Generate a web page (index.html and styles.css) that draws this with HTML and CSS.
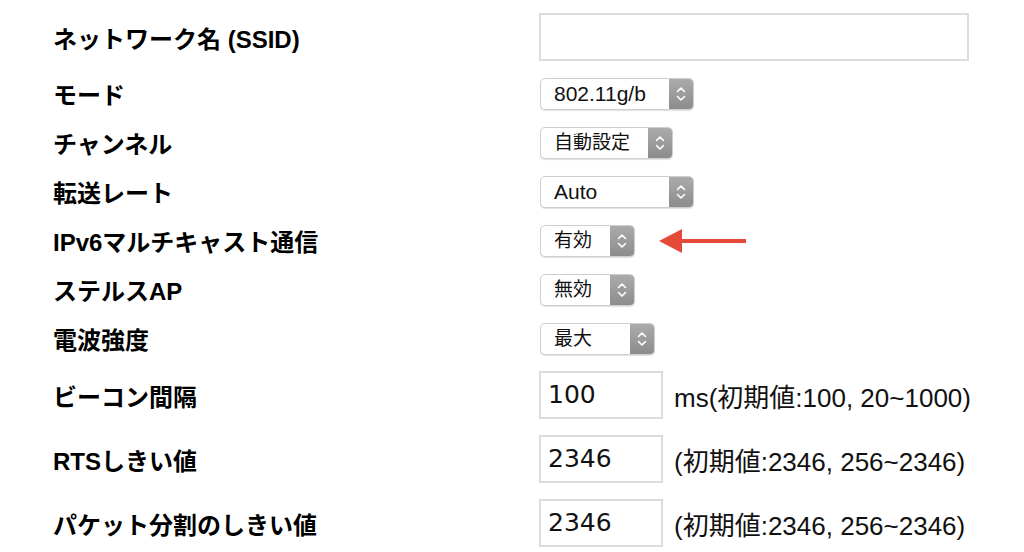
FILE: index.html
```html
<!DOCTYPE html>
<html lang="ja">
<head>
    <meta charset="UTF-8">
    <meta name="viewport" content="width=device-width, initial-scale=1.0">
    <title>無線設定</title>
    <link rel="stylesheet" href="styles.css">
</head>
<body>
    <div class="settings">
        <div class="row row-input">
            <div class="label">ネットワーク名 (SSID)</div>
            <div class="field"><span class="text-box wide"></span></div>
        </div>
        <div class="row">
            <div class="label">モード</div>
            <div class="field">
                <div class="select w-mode"><span class="value">802.11g/b</span><span class="stepper"><svg width="12" height="18" viewBox="0 0 12 18"><path d="M2.5 6.5 L6 3 L9.5 6.5 M2.5 11.5 L6 15 L9.5 11.5" fill="none" stroke="#fff" stroke-width="1.6" stroke-linecap="round" stroke-linejoin="round"/></svg></span></div>
            </div>
        </div>
        <div class="row">
            <div class="label">チャンネル</div>
            <div class="field">
                <div class="select w-channel"><span class="value ja">自動設定</span><span class="stepper"><svg width="12" height="18" viewBox="0 0 12 18"><path d="M2.5 6.5 L6 3 L9.5 6.5 M2.5 11.5 L6 15 L9.5 11.5" fill="none" stroke="#fff" stroke-width="1.6" stroke-linecap="round" stroke-linejoin="round"/></svg></span></div>
            </div>
        </div>
        <div class="row">
            <div class="label">転送レート</div>
            <div class="field">
                <div class="select w-rate"><span class="value">Auto</span><span class="stepper"><svg width="12" height="18" viewBox="0 0 12 18"><path d="M2.5 6.5 L6 3 L9.5 6.5 M2.5 11.5 L6 15 L9.5 11.5" fill="none" stroke="#fff" stroke-width="1.6" stroke-linecap="round" stroke-linejoin="round"/></svg></span></div>
            </div>
        </div>
        <div class="row">
            <div class="label">IPv6マルチキャスト通信</div>
            <div class="field">
                <div class="select w-small"><span class="value ja">有効</span><span class="stepper"><svg width="12" height="18" viewBox="0 0 12 18"><path d="M2.5 6.5 L6 3 L9.5 6.5 M2.5 11.5 L6 15 L9.5 11.5" fill="none" stroke="#fff" stroke-width="1.6" stroke-linecap="round" stroke-linejoin="round"/></svg></span></div>
                <svg class="pointer" width="88" height="26" viewBox="0 0 88 26"><polygon points="0,13 23,1 23,25" fill="#e5493a"/><rect x="20" y="11" width="67" height="4" fill="#e5493a"/></svg>
            </div>
        </div>
        <div class="row">
            <div class="label">ステルスAP</div>
            <div class="field">
                <div class="select w-small"><span class="value ja">無効</span><span class="stepper"><svg width="12" height="18" viewBox="0 0 12 18"><path d="M2.5 6.5 L6 3 L9.5 6.5 M2.5 11.5 L6 15 L9.5 11.5" fill="none" stroke="#fff" stroke-width="1.6" stroke-linecap="round" stroke-linejoin="round"/></svg></span></div>
            </div>
        </div>
        <div class="row">
            <div class="label">電波強度</div>
            <div class="field">
                <div class="select w-power"><span class="value ja">最大</span><span class="stepper"><svg width="12" height="18" viewBox="0 0 12 18"><path d="M2.5 6.5 L6 3 L9.5 6.5 M2.5 11.5 L6 15 L9.5 11.5" fill="none" stroke="#fff" stroke-width="1.6" stroke-linecap="round" stroke-linejoin="round"/></svg></span></div>
            </div>
        </div>
        <div class="row row-input">
            <div class="label">ビーコン間隔</div>
            <div class="field">
                <span class="text-box">100</span>
                <span class="note">ms(初期値:100, 20~1000)</span>
            </div>
        </div>
        <div class="row row-input">
            <div class="label">RTSしきい値</div>
            <div class="field">
                <span class="text-box">2346</span>
                <span class="note">(初期値:2346, 256~2346)</span>
            </div>
        </div>
        <div class="row row-input">
            <div class="label">パケット分割のしきい値</div>
            <div class="field">
                <span class="text-box">2346</span>
                <span class="note">(初期値:2346, 256~2346)</span>
            </div>
        </div>
    </div>
</body>
</html>
```

FILE: styles.css
```css
body {
    margin: 0;
    background: #fff;
    color: #000;
    font-family: "Liberation Sans", "Noto Sans CJK JP", sans-serif;
    overflow: hidden;
}

.settings {
    padding: 5px 0 0 53px;
}

.row {
    display: flex;
    align-items: center;
    height: 49px;
}

.row-input {
    height: 64px;
}

.label {
    width: 486px;
    font-size: 24px;
    font-weight: bold;
}

.field {
    display: flex;
    align-items: center;
}

.text-box {
    box-sizing: border-box;
    width: 124px;
    height: 48px;
    border: 2px solid #dcdcdc;
    padding: 0 0 0 7px;
    font-family: "DejaVu Sans", sans-serif;
    font-size: 25px;
    line-height: 44px;
    color: #111;
}

.text-box.wide {
    width: 430px;
}

.note {
    margin-left: 11px;
    font-size: 26px;
    color: #111;
}

.select {
    box-sizing: border-box;
    display: flex;
    height: 32px;
    margin-left: 1px;
    border: 1px solid #cfcfcf;
    border-radius: 5px;
    box-shadow: 0 1px 1px rgba(0, 0, 0, 0.12);
    overflow: hidden;
    background: #fff;
}

.select .value {
    flex: 1;
    padding-left: 13px;
    font-size: 21px;
    line-height: 30px;
    color: #111;
}

.select .value.ja {
    font-size: 19px;
}

.select .stepper {
    width: 24px;
    display: flex;
    align-items: center;
    justify-content: center;
    background: linear-gradient(#ababab, #8c8c8c);
}

.w-mode { width: 154px; }
.w-channel { width: 133px; }
.w-rate { width: 154px; }
.w-small { width: 95px; }
.w-power { width: 115px; }

.pointer {
    margin-left: 24px;
}
```
